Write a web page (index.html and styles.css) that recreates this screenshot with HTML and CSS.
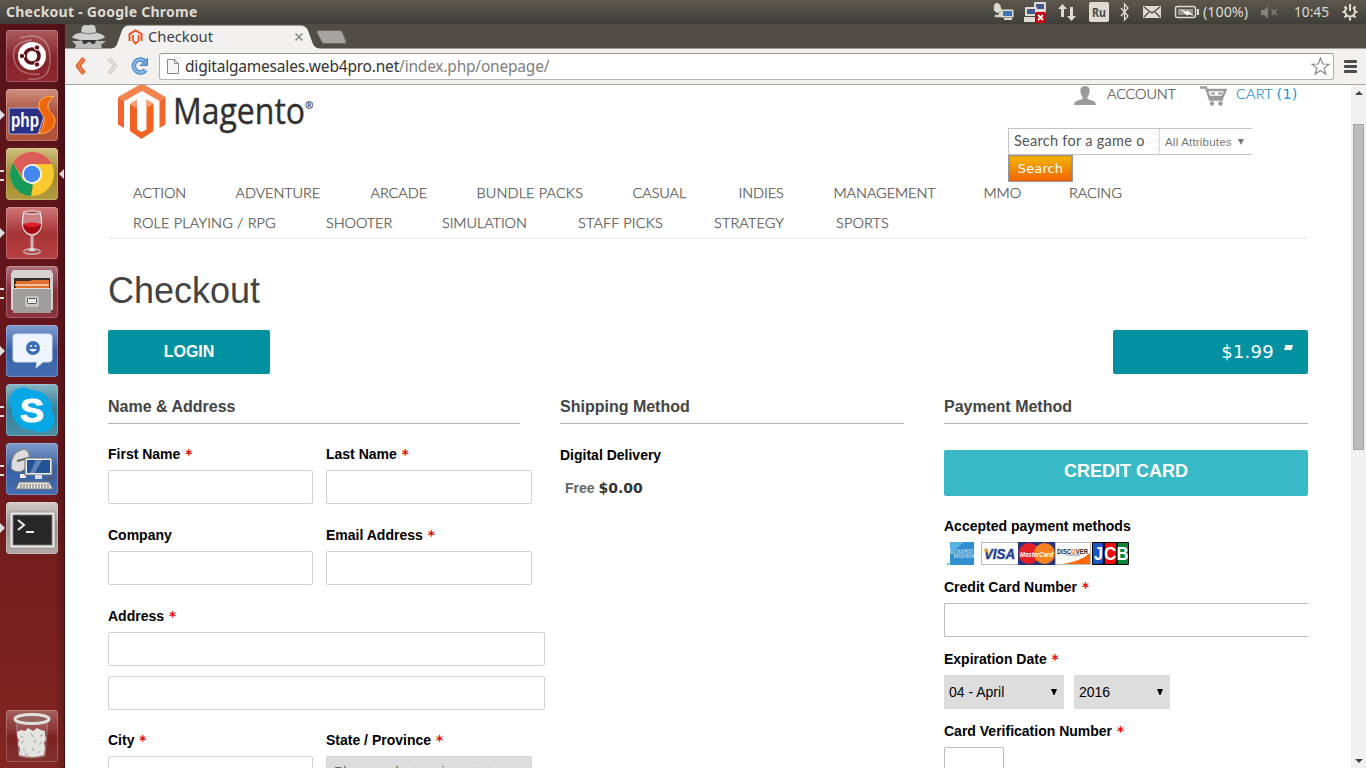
FILE: index.html
```html
<!DOCTYPE html>
<html lang="en">
<head>
<meta charset="utf-8">
<title>Checkout</title>
<link rel="stylesheet" href="styles.css">
</head>
<body>
<div class="desktop">
  <header class="panel">
    <span class="panel-title">Checkout - Google Chrome</span>
    <svg class="tray" width="380" height="24" viewBox="986 0 380 24">
      <g fill="#dfdbd2">
        <path d="M994 5q3-4 6 0l2 6q-5 4-8-1zM999 12v3h-4v2h9v-2h-2v-4z" stroke="#bdbab3" stroke-width=".6"/>
        <rect x="1001.500" y="9.500" width="12" height="8" rx="1"/>
        <rect x="1003" y="11" width="9" height="5" fill="#3b77b6"/>
        <rect x="1004" y="18" width="8" height="2"/>
        <rect x="1034" y="2" width="12" height="9" rx="1"/><rect x="1036" y="4" width="8" height="5" fill="#41598f"/>
        <rect x="1025" y="7" width="12" height="9" rx="1"/><rect x="1027" y="9" width="8" height="5" fill="#41598f"/>
        <rect x="1024" y="17" width="12" height="5"/><rect x="1036" y="11" width="10" height="4"/>
        <rect x="1035" y="12" width="11" height="11" rx="1.500" fill="#c90010"/>
        <path d="M1038 15l5 5m0-5l-5 5" stroke="#fff" stroke-width="1.800"/>
        <path d="M1062.500 4l4.500 5h-3v8h-3V9h-3zM1071.500 21l4.500-5h-3V7h-3v9h-3z"/>
        <rect x="1089" y="2" width="20" height="20" rx="2"/>
        <rect x="1143" y="6" width="18" height="12"/>
        <path d="M1144 7l8 6 8-6M1144 17l5-5m11 5l-5-5" fill="none" stroke="#4b4943" stroke-width="1.300"/>
        <path d="M1121 8l7 8-3.500 4V4l3.500 4-7 8" fill="none" stroke="#dfdbd2" stroke-width="1.300"/>
        <rect x="1175.500" y="6.500" width="20" height="11" rx="2" fill="none" stroke="#dfdbd2" stroke-width="1.500"/>
        <rect x="1178" y="9" width="15" height="6" fill="#99968e"/><rect x="1197" y="9" width="2" height="6"/>
        <path d="M1180 9l7 3 0-2 7 6-6-2v2z" fill="#fff"/>
        <path d="M1261 10h3l4-3.500v12l-4-3.500h-3z" fill="#85827a"/><path d="M1271.500 9.500l5 5.500m0-5.500l-5 5.500" stroke="#85827a" stroke-width="1.600"/>
        <g fill="none" stroke="#dfdbd2"><path d="M1347 7.500a5 5 0 1 0 6 0" stroke-width="2"/><path d="M1350 4v7M1342.500 12h2M1355.500 12h2M1344.500 6.500l2 2M1355.500 6.500l-2 2M1344.500 17.500l2-2M1355.500 17.500l-2-2M1350 17.500v3" stroke-width="2"/></g>
      </g>
      <g class="tray-text">
        <text x="1092" y="17" class="lang" textLength="14" lengthAdjust="spacingAndGlyphs">Ru</text>
        <text x="1203" y="17" textLength="45" lengthAdjust="spacingAndGlyphs">(100%)</text>
        <text x="1294" y="17" textLength="35" lengthAdjust="spacingAndGlyphs">10:45</text>
      </g>
    </svg>
  </header>
  <div class="workspace">
    <nav class="launcher">
      <div class="tile tile-dash">
        <svg viewBox="0 0 52 52"><g fill="none" stroke="#fff" stroke-opacity=".3" stroke-width="1.500"><path d="M14 8Q42 0 44 26T22 49M8 30Q4 12 26 10M8 28Q10 46 34 44"/></g><circle cx="26" cy="26" r="14" fill="#fff"/><circle cx="26" cy="26" r="7" fill="none" stroke="#621218" stroke-width="3.600"/><g fill="#621218" stroke="#fff"><circle cx="16" cy="26" r="2.700"/><circle cx="31" cy="17.500" r="2.700"/><circle cx="31" cy="34.500" r="2.700"/></g></svg>
      </div>
      <div class="tile tile-php pip">
        <svg viewBox="0 0 52 52"><path d="M3 19h29l6 8-6 18H3z" fill="#2a3184" stroke="#a9b0de"/><text x="5" y="38" class="php" textLength="28" lengthAdjust="spacingAndGlyphs">php</text><path d="M48 7.500c-11-1-16 4-15 10 1 7 6 9 5 15-1 7-3 11-6 12 10 1 17-5 17-13 0-7-7-8-7-14 0-4 2-8 6-10z" fill="#ef650c" stroke="#ffb35a"/></svg>
      </div>
      <div class="tile tile-chrome pips active">
        <svg viewBox="0 0 52 52"><circle cx="26" cy="26" r="22" fill="#f9c92f"/><path d="M7 15a22 22 0 0 1 39 1H26l-9 14z" fill="#dc5d57"/><path d="M7 15l10 17 10 5-2 11A22 22 0 0 1 7 15z" fill="#179a5a"/><circle cx="26" cy="26" r="10" fill="#fff"/><circle cx="26" cy="26" r="8.300" fill="#4587ee"/></svg>
      </div>
      <div class="tile tile-wine pip">
        <svg viewBox="0 0 52 52"><path d="M18 5h16q5 19-6 23h-4Q13 24 18 5z" fill="#c98283" stroke="#eee" stroke-width="1.200"/><path d="M24.500 28h3v15h-3z" fill="#d2b5b5"/><path d="M17 17q9 5 18 0 0 8-9 10-9-2-9-10z" fill="#a80510"/><ellipse cx="26" cy="17.500" rx="8" ry="2" fill="#e01d25"/><ellipse cx="26" cy="5.500" rx="8" ry="1.600" fill="#a74b50" stroke="#eee"/><ellipse cx="26" cy="44.500" rx="8.500" ry="2.800" fill="#a55" stroke="#ddd"/><path d="M22 44l3-3h2l3 3z" fill="#ddd"/></svg>
      </div>
      <div class="tile tile-files pips">
        <svg viewBox="0 0 52 52"><path d="M7 4h38l2 4v36H5V8z" fill="#d5d3d1"/><path d="M8 12h36v12H8z" fill="#39302c"/><path d="M10 15h14l2-1h17v10H10z" fill="#df7030"/><path d="M9 19h34" stroke="#f3c199" stroke-width="2"/><rect x="7" y="22" width="38" height="25" fill="#9f9e9d"/><path d="M7 22.500h38" stroke="#ddd"/><rect x="19" y="30" width="14" height="11" rx="2" fill="#c6c6c6"/><rect x="21.500" y="32.500" width="9" height="5" rx="1" fill="#eee" stroke="#555"/></svg>
      </div>
      <div class="tile tile-chat pip">
        <svg viewBox="0 0 52 52"><path d="M10 9h33q3 0 3 3v22q0 3-3 3h-6l-7 6 1-6H10q-3 0-3-3V12q0-3 3-3z" fill="#eff5ff" stroke="#d2def5"/><circle cx="27" cy="23" r="7" fill="#3c6db8"/><path d="M23 24q4 5 8 0z" fill="#fff"/><circle cx="25" cy="21" r="1" fill="#fff"/><circle cx="29.500" cy="21" r="1" fill="#fff"/></svg>
      </div>
      <div class="tile tile-skype pips">
        <svg viewBox="0 0 52 52"><circle cx="17" cy="17" r="13.500" fill="#08a8e7"/><circle cx="35" cy="35" r="13.500" fill="#08a8e7"/><circle cx="26" cy="26" r="20" fill="#08a8e7"/><text x="14" y="38" class="skype" textLength="24" lengthAdjust="spacingAndGlyphs">S</text></svg>
      </div>
      <div class="tile tile-remote pips">
        <svg viewBox="0 0 52 52"><path d="M5 26Q4 9 18 6q8 2 4 15-6 13-17 5z" fill="#ddd" stroke="#77786f"/><path d="M11 18L23 15M17 30v5" stroke="#62625c" stroke-width="2"/><path d="M14 31h6v4h-6z" fill="#eee"/><rect x="19" y="15" width="27" height="17" fill="#eee" stroke="#6b7175"/><rect x="21" y="17" width="23" height="13" fill="#225395"/><path d="M24 30l6-13h6l-7 13z" fill="#5d83b8"/><path d="M29 32h7v4h-7z" fill="#ddd"/><path d="M13 39h30l4 7H10z" fill="#e4e2dc" stroke="#777"/><path d="M14 42h29M14 44h30" stroke="#76756d" stroke-dasharray="2 1"/><path d="M39 36h7q2-3-4-1" fill="none" stroke="#555"/></svg>
      </div>
      <div class="tile tile-term pip">
        <svg viewBox="0 0 52 52"><rect x="4" y="10" width="45" height="36" rx="1" fill="#eee" stroke="#9b9794"/><rect x="7" y="13" width="39" height="30" fill="#272727" stroke="#777"/><path d="M12 18l6 5-6 5M20 30h8" fill="none" stroke="#eee" stroke-width="2"/></svg>
      </div>
      <div class="tile tile-trash">
        <svg viewBox="0 0 52 52"><path d="M10 10h32l-3 36q-13 4-26 0z" fill="#fff" fill-opacity=".12" stroke="#bbb" stroke-opacity=".5"/><path d="M11 22l4-2 4 1 3-3 5 3 4-3 4 2 4 1v4l1 4-2 4 1 5-1 7q-11 4-25 0l1-6-2-5 1-4-2-4z" fill="#e3e3e0"/><path d="M15 26l2 2m8-4l3 3m6-1l3-1m-22 8l3-2m10-1l2 3m6-1l-3 3m-16 4l2 2m7-3l2 3m6 0l-2 2m-13 0l3 3" fill="none" stroke="#b9b8b4" stroke-width="1.500"/><ellipse cx="26" cy="9" rx="17" ry="4.500" fill="#94615e" stroke="#dfe1dd" stroke-width="3"/></svg>
      </div>
    </nav>
    <div class="browser">
      <svg class="tabstrip" width="1301" height="25" viewBox="65 24 1301 25">
        <path d="M65 48.500h44c6 0 7-1 9-7l4-11q2-5 7-5h171q6 0 8 5l4 11q2 7 8 7h1046v1H65z" fill="#f2f1f0"/>
        <path d="M80.500 35l1.500-8q2-3 6-1.500 4-1.500 7 .5l2 9z" fill="#cfcfcf"/>
        <path d="M81 31.500q8 3 15.500 0l.5 2q-8 2-16.500 0z" fill="#8a8a8a"/>
        <path d="M72 37.500q2-4 8-4.500 9 3 17 0 7 1 8 4.500-5 3-16 3t-17-3z" fill="#d0d0d0"/><path d="M77 41q12-2 22 0l7 0-5 4 1 3H75l1-3-4-4z" fill="#bcbcbc"/><path d="M82 40h14l-1 3.500q-3 1.500-5-1.500h-2q-2 3-5 1.500z" fill="#363636"/>
        <g fill="none" stroke="#ee501f" stroke-width="2"><path d="M129.500 41v-7l6-3.500 6 3.500v7"/><path d="M133 41.500V35M138.500 41.500V35M133 41l2.500 2.500 3-2.500" stroke-width="1.700"/></g>
        <text x="148" y="42" class="tab-text" textLength="65" lengthAdjust="spacingAndGlyphs">Checkout</text>
        <path d="M295.500 33.500l7 7m0-7l-7 7" stroke="#888" stroke-width="1.500"/>
        <path d="M319 30.500h21q2 0 3 3l3 8q1 2-2 2h-20q-2 0-3-3l-4-8q-1-2 2-2z" fill="#a5a4a1" stroke="#696760"/>
      </svg>
      <div class="toolbar">
        <svg class="nav-icons" width="94" height="35" viewBox="65 49 94 35">
          <path d="M84 58.500l-6 7.500 6 7.500" fill="none" stroke="#d5571e" stroke-width="4.500" stroke-linejoin="round"/><path d="M84 58.500l-6 7.500 6 7.500" fill="none" stroke="#f3814c" stroke-width="2.500" stroke-linejoin="round"/>
          <path d="M109 58.500l6 7.500-6 7.500" fill="none" stroke="#c9c8c5" stroke-width="4"/><path d="M109 58.500l6 7.500-6 7.500" fill="none" stroke="#e4e3e1" stroke-width="2"/>
          <path d="M144.500 61a6.500 6.500 0 1 0 1 9" fill="none" stroke="#4c83bf" stroke-width="4.500"/><path d="M144.500 61a6.500 6.500 0 1 0 1 9" fill="none" stroke="#83b6e6" stroke-width="2.500"/><path d="M147.500 58v7.500H140z" fill="#6da5db" stroke="#4c83bf"/>
        </svg>
        <div class="omnibox">
          <svg width="12" height="15" viewBox="0 0 12 15"><path d="M.5.500h7l4 4v10H.5z" fill="#f5f5f5" stroke="#888"/><path d="M7.500.500v4h4" fill="none" stroke="#888"/></svg>
          <span class="url">digitalgamesales.web4pro.net<span>/index.php/onepage/</span></span>
          <svg width="19" height="19" viewBox="0 0 19 19"><path d="M9.500 1l2.300 6 6.200.2-4.900 3.900L14.900 17l-5.400-3.500L4.100 17l1.800-5.900L1 7.200 7.200 7z" fill="#fff" stroke="#888" stroke-width="1.200"/></svg>
        </div>
        <div class="menu"><i></i><i></i><i></i></div>
      </div>
      <div class="viewport">
        <main class="page">
          <div class="head">
            <svg class="logo" width="210" height="56" viewBox="108 85 210 56">
              <path d="M118 97l21-12h6l20.500 12-6 4L142 91l-17.500 10z" fill="#f58550"/><path d="M118 97l6 4v27l-6-3.500zM165.500 97v27.500l-6 3.500v-27z" fill="#ee672f"/>
              <path d="M130 104l7-4.500v30l4.500 2.500 5-2.500v-30l7 4.500v27l-12 8-11.500-8z" fill="#f26322"/><path d="M130 104l7-4.500v9zM146.500 99.500l7 4.500-7 4z" fill="#f9a27b"/>
              <text x="173" y="124" class="logo-text" textLength="132" lengthAdjust="spacingAndGlyphs">Magento</text>
              <text x="305" y="108.500" class="logo-reg" textLength="8.500" lengthAdjust="spacingAndGlyphs">®</text>
            </svg>
            <div class="tools">
              <div class="links">
                <svg class="user" width="22" height="19" viewBox="0 0 22 19"><path d="M11 0c4 0 5 3 4.500 6q-.5 4-2 5v2l6 2q2.500 1 2.500 4H0q0-3 2.500-4l6-2v-2q-1.500-1-2-5C6 3 7 0 11 0z" fill="#9a9a9a"/></svg>
                <span class="account">ACCOUNT</span>
                <svg class="cart-icon" width="27" height="20" viewBox="0 0 27 20"><path d="M0 1.500h6l4 12h13M7 4h18.500l-3 7H9" fill="none" stroke="#9a9a9a" stroke-width="2.300"/><path d="M11 7.500h4m3 0h4" stroke="#9a9a9a" stroke-width="2"/><circle cx="12" cy="17.500" r="2.200" fill="#9a9a9a"/><circle cx="20.500" cy="17.500" r="2.200" fill="#9a9a9a"/></svg>
                <span class="cart">CART <span>(1)</span></span>
              </div>
              <div class="search"><span class="query">Search for a game o</span><span class="attrs">All Attributes <svg width="6" height="6" viewBox="0 0 6 6"><path d="M0 0h6L3 6z" fill="#777"/></svg></span></div>
              <button class="search-btn">Search</button>
            </div>
          </div>
          <div class="cats">
            <div class="cats-row row-a"><a>ACTION</a><a>ADVENTURE</a><a>ARCADE</a><a class="bundle">BUNDLE PACKS</a><a>CASUAL</a><a>INDIES</a><a>MANAGEMENT</a><a>MMO</a><a>RACING</a></div>
            <div class="cats-row row-b"><a class="rpg">ROLE PLAYING / RPG</a><a>SHOOTER</a><a>SIMULATION</a><a class="bundle">STAFF PICKS</a><a class="bundle">STRATEGY</a><a class="bundle">SPORTS</a></div>
          </div>
          <h1>Checkout</h1>
          <div class="actions">
            <button class="login">LOGIN</button>
            <div class="total">$1.99 <svg width="9" height="5" viewBox="0 0 9 5"><path d="M1.500 0H9L7.500 5H0z" fill="#fff"/></svg></div>
          </div>
          <div class="columns">
            <section class="col">
              <h2>Name &amp; Address</h2>
              <div class="form">
                <div class="field"><label>First Name <em>*</em></label><div class="input"></div></div>
                <div class="field"><label>Last Name <em>*</em></label><div class="input"></div></div>
                <div class="field"><label>Company</label><div class="input"></div></div>
                <div class="field"><label>Email Address <em>*</em></label><div class="input"></div></div>
                <div class="field wide"><label>Address <em>*</em></label><div class="input"></div><div class="input second"></div></div>
                <div class="field"><label>City <em>*</em></label><div class="input"></div></div>
                <div class="field"><label>State / Province <em>*</em></label><div class="input disabled">Please select region, state</div></div>
              </div>
            </section>
            <section class="col">
              <h2>Shipping Method</h2>
              <p class="delivery">Digital Delivery</p>
              <p class="rate">Free <b>$0.00</b></p>
            </section>
            <section class="col">
              <h2>Payment Method</h2>
              <button class="credit">CREDIT CARD</button>
              <p class="accepted">Accepted payment methods</p>
              <svg class="cards" width="190" height="23" viewBox="944 542 190 23">
                <rect x="950" y="542" width="24" height="23" fill="#2f8fd0"/><path d="M950 542h14l-14 12z" fill="#58b2e2"/><path d="M950 549h23v4.500h-23zM954 554h20v4h-20z" fill="#a6d3ee"/>
                <text x="950.500" y="552.800" class="amex" textLength="22" lengthAdjust="spacingAndGlyphs">AMERICAN</text><text x="955" y="557.600" class="amex" textLength="18" lengthAdjust="spacingAndGlyphs">EXPRESS</text><path d="M947 563h2v2h-2z" fill="#67b7dc"/>
                <rect x="981.500" y="542.500" width="37" height="22" fill="#fff" stroke="#bbb"/><text x="984" y="559" class="visa" textLength="31" lengthAdjust="spacingAndGlyphs">VISA</text><path d="M983 549h4l3 6z" fill="#f3a21b"/>
                <rect x="1018" y="542" width="37" height="23" fill="#29337e"/><circle cx="1029" cy="553.500" r="10.500" fill="#e41f26"/><circle cx="1044.500" cy="553.500" r="10.500" fill="#f58220"/><text x="1020" y="557" class="mc" textLength="33" lengthAdjust="spacingAndGlyphs">MasterCard</text>
                <rect x="1055.500" y="542.500" width="35" height="22" fill="#fff" stroke="#bbb"/><path d="M1063 564q18-3 27-11v11z" fill="#ff6b0b"/><text x="1057" y="553.500" class="disc" textLength="31" lengthAdjust="spacingAndGlyphs">DISC<tspan fill="#f47216">O</tspan>VER</text><path d="M1066 555h14" stroke="#888"/>
                <rect x="1092" y="542" width="37" height="23" rx="1" fill="#000"/><path d="M1093 543h10v20l-2 1h-8z" fill="#1c55c4"/><path d="M1105 543h11v19l-2 2h-9z" fill="#f50a0a"/><path d="M1118 543h10v21h-10z" fill="#07883d"/><g class="jcb"><text x="1094" y="560" textLength="9" lengthAdjust="spacingAndGlyphs">J</text><text x="1104" y="560" textLength="12.500" lengthAdjust="spacingAndGlyphs">C</text><text x="1116.500" y="560" textLength="12" lengthAdjust="spacingAndGlyphs">B</text></g>
              </svg>
              <label class="cc">Credit Card Number <em>*</em></label><div class="input cc-input"></div>
              <label class="exp">Expiration Date <em>*</em></label>
              <div class="selects"><div class="select month">04 - April<svg width="6" height="6" viewBox="0 0 6 6"><path d="M0 0h6L3.500 6h-1z"/></svg></div><div class="select year">2016<svg width="6" height="6" viewBox="0 0 6 6"><path d="M0 0h6L3.500 6h-1z"/></svg></div></div>
              <label class="exp">Card Verification Number <em>*</em></label><div class="input cvv"></div>
            </section>
          </div>
        </main>
        <div class="scrollbar"><i class="arrow up"></i><div class="thumb"></div><i class="arrow down"></i></div>
      </div>
    </div>
  </div>
</div>
</body>
</html>
```
FILE: styles.css
```css
* { box-sizing: border-box; }
body { margin: 0; font-family: "Liberation Sans", Arial, sans-serif; overflow: hidden; }
p, h1, h2 { margin: 0; }
svg { display: block; flex: none; }
button { border: 0; padding: 0; font: inherit; }
.desktop { width: 1366px; height: 768px; display: flex; flex-direction: column; overflow: hidden; }
.panel { flex: none; height: 24px; display: flex; justify-content: space-between; align-items: center; padding-left: 6px; background: linear-gradient(#5b584f, #3f3e39); }
.panel-title { font: bold 14px/24px "Noto Sans", sans-serif; letter-spacing: .25px; color: #dfdbd2; white-space: nowrap; }
.tray-text { font: 14.500px "Noto Sans", sans-serif; fill: #dfdbd2; }
.lang { font-weight: bold; font-size: 13px; fill: #4b4943; }
.workspace { flex: 1; min-height: 0; display: flex; }

.launcher { flex: none; width: 65px; padding: 6px 0 6px 6px; display: flex; flex-direction: column; gap: 7px; background: linear-gradient(90deg, transparent 85%, rgba(0,0,0,.2)), linear-gradient(#56131a, #6d191d 60%, #822722); border-right: 1px solid #4d1114; }
.tile { position: relative; flex: none; width: 52px; height: 52px; border-radius: 4px; box-shadow: inset 0 0 0 1px rgba(255,255,255,.22); }
.tile svg { width: 52px; height: 52px; }
.tile-dash { background: linear-gradient(#ad5a5c, #84252b 55%, #90282f); }
.tile-php { background: linear-gradient(#ce8f80, #a94e38 50%, #b3543d); }
.tile-chrome { background: linear-gradient(#d0bf80, #a1882f 50%, #b39b3f); }
.tile-wine { background: linear-gradient(#cf7778, #a73437 50%, #b43f42); }
.tile-files { background: linear-gradient(#b0747c, #7f2c38 50%, #8b3542); }
.tile-chat { background: linear-gradient(#809dd0, #365fa5 50%, #456fb1); }
.tile-skype { background: linear-gradient(#85b4c5, #36809a 50%, #488ea6); }
.tile-remote { background: linear-gradient(#7f9ccb, #385fa4 50%, #456eaf); }
.tile-term { background: linear-gradient(#d0cac8, #9c9290 50%, #b1a8a6); }
.tile-trash { margin-top: auto; background: linear-gradient(#a4605d, #882e2e 45%, #7b211f 50%, #80302e); }
.pip::before { content: ""; position: absolute; left: -6px; top: 21px; border: 5px solid transparent; border-left-color: #ddd; border-right: 0; }
.pips::before { content: ""; position: absolute; left: -6px; top: 22px; width: 4px; height: 7px; border: solid #ddd; border-width: 2px 0; }
.active::after { content: ""; position: absolute; right: -6px; top: 21px; border: 5px solid transparent; border-right-color: #ddd; border-left: 0; }
.php { font: bold 20px "Liberation Sans", sans-serif; fill: #fff; }
.skype { font: bold 34px "Liberation Sans", sans-serif; fill: #fff; stroke: #fff; stroke-width: 1px; }

.browser { flex: 1; min-width: 0; display: flex; flex-direction: column; }
.tabstrip { background: #504d46; }
.tab-text { font: 15px "Noto Sans", sans-serif; fill: #3c3c3c; }
.toolbar { flex: none; height: 36px; display: flex; background: #f2f1f0; border-bottom: 1px solid #a9a7a5; }
.omnibox { width: 1175px; height: 27px; margin-top: 4px; display: flex; align-items: center; padding: 0 3px 0 7px; background: #fff; border: 1px solid #b3b1ae; border-top-color: #999; border-radius: 3px; }
.url { flex: 1; margin-left: 6px; padding-bottom: 2px; font: 15.500px/22px "Noto Sans", sans-serif; letter-spacing: -.2px; color: #333; }
.url span { color: #808080; }
.menu { margin: 11px 0 0 10px; display: flex; flex-direction: column; gap: 2px; }
.menu i { width: 13px; height: 3px; border-radius: 1px; background: #4c4c4c; }

.viewport { flex: 1; min-height: 0; display: flex; justify-content: space-between; background: #fff; }
.page { width: 1200px; margin-left: 43px; height: 683px; overflow: hidden; }
.head { height: 93px; display: flex; justify-content: space-between; }
.logo-text { font: 36px "Open Sans", sans-serif; fill: #303030; stroke: #303030; stroke-width: .4px; }
.logo-reg { font: bold 11px "Open Sans", sans-serif; fill: #303030; }
.tools { width: 300px; }
.links { height: 43px; display: flex; padding-left: 66px; font: 300 14.500px/17px Lato, sans-serif; color: #555; white-space: nowrap; -webkit-text-stroke: .25px; }
.user { margin-top: 1px; }
.account { width: 93px; margin-left: 11px; letter-spacing: -.15px; }
.cart-icon { margin-top: 1px; }
.cart { margin-left: 9px; letter-spacing: .2px; color: #2a93d0; }
.cart span { font: 14.500px "DejaVu Sans", sans-serif; -webkit-text-stroke: 0; }
.search { width: 244px; height: 27px; display: flex; align-items: center; border: 1px solid #c3c3c3; border-right: 0; white-space: nowrap; }
.query { width: 151px; height: 25px; padding-left: 5px; font: 14.500px/24px Lato, sans-serif; letter-spacing: .28px; color: #555; border-right: 1px dotted #bbb; }
.attrs { display: flex; align-items: center; gap: 6px; padding-left: 5px; font-size: 11.500px; letter-spacing: .2px; color: #777; }
.search-btn { display: block; width: 65px; height: 27px; border: 1px solid #999; background: linear-gradient(#f2b500, #f16500); color: #fff; font: 13px "DejaVu Sans", sans-serif; letter-spacing: .1px; box-shadow: inset 0 0 2px #e75000; }

.cats { height: 61px; border-bottom: 1px solid #eaeaea; }
.cats-row { height: 30px; padding-left: 25px; display: grid; font: 300 14.500px/30px Lato, sans-serif; letter-spacing: -.08px; color: #505050; white-space: nowrap; -webkit-text-stroke: .25px; }
.rpg { letter-spacing: .15px; }
.bundle { letter-spacing: .12px; }
.row-a { grid-template-columns: 102.500px 135px 106px 156px 106px 95px 150px 85.500px auto; }
.row-b { grid-template-columns: 193px 116px 136px 136px 122px auto; }
h1 { height: 91px; padding-top: 31px; font: 36px/41px "Liberation Sans", sans-serif; color: #444; }
.actions { display: flex; justify-content: space-between; height: 44px; }
.login { width: 162px; border-radius: 2px; background: #0191a1; color: #fff; font-size: 16px; font-weight: bold; }
.total { width: 195px; border-radius: 2px; background: #0191a1; color: #fff; font: 18px/44px "DejaVu Sans", sans-serif; letter-spacing: .25px; padding-right: 15px; display: flex; justify-content: flex-end; gap: 10px; }
.total svg { margin-top: 15px; }
.columns { margin-top: 22px; display: grid; grid-template-columns: 412px 344px 364px; column-gap: 40px; }
.col { min-width: 0; }
h2 { height: 28px; font-size: 16px; line-height: 21px; color: #444; border-bottom: 1px solid #b3b3b3; }
.form { width: 437px; margin-top: 20px; display: grid; grid-template-columns: 205px 206px; column-gap: 13px; row-gap: 21px; }
.wide { grid-column: 1 / -1; width: 437px; margin-bottom: -1px; }
label { display: block; height: 20px; margin-bottom: 6px; font-weight: bold; font-size: 14px; line-height: 20px; color: #000; white-space: nowrap; }
em { font: normal bold 13.500px/1 "DejaVu Sans", sans-serif; margin-left: 1px; color: #eb0000; }
.input { height: 34px; border: 1px solid #d2d2d2; border-radius: 2px; background: #fff; }
.second { margin-top: 10px; }
.disabled { background: #ddd; color: #666; font-size: 14px; padding: 6px 7px; line-height: 18px; overflow: hidden; white-space: nowrap; }
.delivery { margin-top: 21px; font-size: 14px; font-weight: bold; line-height: 20px; }
.rate { margin-top: 13px; padding-left: 5px; font-size: 14px; font-weight: bold; line-height: 20px; color: #666; }
.rate b { font: bold 14px/20px "DejaVu Sans", sans-serif; color: #333; }
.credit { display: block; width: 364px; height: 46px; margin-top: 26px; padding-bottom: 3px; border-radius: 2px; background: #39b8c6; color: #fff; font-size: 18px; font-weight: bold; }
.accepted { margin: 20px 0 6px; font-size: 14px; font-weight: bold; line-height: 20px; }
.cc { margin-top: 12px; }
.cc-input { border-color: #bbb; border-right: 0; border-radius: 2px 0 0 2px; }
.exp { margin-top: 12px; }
.selects { display: flex; gap: 10px; }
.select { height: 34px; background: #ddd; display: flex; justify-content: space-between; align-items: center; padding: 0 7px 0 5px; font-size: 14px; color: #000; }
.month { width: 120px; }
.year { width: 96px; }
.cvv { width: 60px; border-color: #bbb; }
.amex { font: bold 4.500px "Liberation Sans", sans-serif; fill: #338cc9; }
.visa { font: italic bold 15px "Liberation Sans", sans-serif; fill: #1c3d93; stroke: #1c3d93; stroke-width: .4px; }
.mc { font: italic bold 8px "Liberation Sans", sans-serif; fill: #fff; }
.disc { font: bold 7.500px "Liberation Sans", sans-serif; fill: #222; }
.jcb { font: bold 18px "Liberation Sans", sans-serif; fill: #fff; }
.scrollbar { width: 15px; background: #f1f1f1; display: flex; flex-direction: column; align-items: center; }
.arrow { width: 0; border: 4px solid transparent; }
.up { margin-top: 6px; border-top: 0; border-bottom-color: #444; }
.thumb { width: 11px; height: 326px; margin-top: 29px; background: #bcbcbc; border: 1px solid #a6a6a6; }
.down { margin: auto 0 5px; border-bottom: 0; border-top-color: #444; }
```
